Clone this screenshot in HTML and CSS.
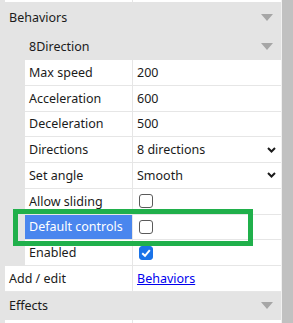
FILE: index.html
```html
<!DOCTYPE html>
<html>
<head>
  <link rel="stylesheet" href="styles.css">
</head>
<body>
  <div class="inspector">
    <div class="panel">
      <!-- row cut off by the scroll position -->
      <div class="row row-top">
        <div class="cell label"></div>
        <div class="cell value"></div>
      </div>

      <div class="group-header">
        <span>Behaviors</span>
        <svg class="toggle" width="12" height="7" viewBox="0 0 12 7"><polygon points="0,0 12,0 6,7" /></svg>
      </div>

      <div class="group-header sub">
        <span>8Direction</span>
        <svg class="toggle" width="12" height="7" viewBox="0 0 12 7"><polygon points="0,0 12,0 6,7" /></svg>
      </div>

      <div class="row nested">
        <div class="cell label">Max speed</div>
        <div class="cell value">200</div>
      </div>
      <div class="row nested">
        <div class="cell label">Acceleration</div>
        <div class="cell value">600</div>
      </div>
      <div class="row nested">
        <div class="cell label">Deceleration</div>
        <div class="cell value">500</div>
      </div>
      <div class="row nested">
        <div class="cell label">Directions</div>
        <div class="cell value select">
          <span>8 directions</span>
          <svg class="chevron" width="9" height="6" viewBox="0 0 9 6"><polyline points="1,1 4.5,4.5 8,1" /></svg>
        </div>
      </div>
      <div class="row nested">
        <div class="cell label">Set angle</div>
        <div class="cell value select">
          <span>Smooth</span>
          <svg class="chevron" width="9" height="6" viewBox="0 0 9 6"><polyline points="1,1 4.5,4.5 8,1" /></svg>
        </div>
      </div>
      <div class="row nested">
        <div class="cell label">Allow sliding</div>
        <div class="cell value"><span class="checkbox"></span></div>
      </div>
      <div class="row nested selected">
        <div class="cell label">Default controls</div>
        <div class="cell value"><span class="checkbox"></span></div>
        <div class="highlight"></div>
      </div>
      <div class="row nested">
        <div class="cell label">Enabled</div>
        <div class="cell value">
          <span class="checkbox checked">
            <svg width="14" height="14" viewBox="0 0 14 14"><polyline points="3.2,7.2 6,9.8 10.8,4.2" /></svg>
          </span>
        </div>
      </div>

      <div class="row">
        <div class="cell label">Add / edit</div>
        <div class="cell value"><a class="link" href="#">Behaviors</a></div>
      </div>

      <div class="group-header last">
        <span>Effects</span>
        <svg class="toggle" width="12" height="7" viewBox="0 0 12 7"><polygon points="0,0 12,0 6,7" /></svg>
      </div>

      <div class="row">
        <div class="cell label"></div>
        <div class="cell value"></div>
      </div>
    </div>

    <div class="scrollbar">
      <div class="thumb"></div>
    </div>
  </div>
</body>
</html>
```

FILE: styles.css
```css
* {
  margin: 0;
  padding: 0;
  box-sizing: border-box;
}

body {
  background: #e4e4e4;
  font-family: "Noto Sans", "Open Sans", sans-serif;
  font-size: 12.5px;
  color: #1b1b1b;
  overflow: hidden;
  height: 323px;
}

.inspector {
  display: flex;
  height: 323px;
  overflow: hidden;
}

.panel {
  width: 281px;
  background: #e4e4e4;
}

/* Property rows */
.row {
  position: relative;
  display: grid;
  grid-template-columns: 128px 1fr;
  margin-left: 5px;
  height: 25.75px;
  background: #fff;
  border-bottom: 1px solid #e6e6e6;
}

.row.nested {
  grid-template-columns: 108px 1fr;
  margin-left: 25px;
}

.row-top {
  height: 2px;
  border-bottom: none;
}

.cell {
  display: flex;
  align-items: center;
  white-space: nowrap;
}

.label {
  padding-left: 4px;
  border-right: 1px solid #e6e6e6;
}

.value {
  padding-left: 4px;
}

.select {
  justify-content: space-between;
  padding-right: 5px;
}

.chevron polyline {
  fill: none;
  stroke: #1b1b1b;
  stroke-width: 2;
}

/* Selected property */
.selected {
  z-index: 2;
}

.selected .label {
  background: #4a86ee;
  color: #fff;
}

.highlight {
  position: absolute;
  left: -12px;
  top: -6px;
  width: 240px;
  height: 37px;
  border: 5px solid #20b04b;
  pointer-events: none;
}

/* Checkboxes */
.checkbox {
  display: inline-block;
  width: 14px;
  height: 14px;
  margin-left: 2px;
  border: 1px solid #5a5a5a;
  border-radius: 3px;
  background: #fff;
}

.checkbox.checked {
  background: #1a73e8;
  border-color: #1a73e8;
}

.checkbox svg {
  display: block;
  margin: -1px;
}

.checkbox polyline {
  fill: none;
  stroke: #fff;
  stroke-width: 2;
}

.link {
  color: #0000ee;
  text-decoration: underline;
}

/* Group headers */
.group-header {
  display: flex;
  align-items: center;
  justify-content: space-between;
  height: 31px;
  padding: 0 8px 0 9px;
  background: #e4e4e4;
}

.group-header.sub {
  height: 27px;
  padding-left: 29px;
}

.group-header.last {
  height: 28px;
}

.toggle polygon {
  fill: #a6a6a6;
}

/* Scrollbar */
.scrollbar {
  width: 12px;
  background: #f1f1f1;
  padding-left: 1px;
}

.thumb {
  height: 100%;
  background: #c1c1c1;
}
```
